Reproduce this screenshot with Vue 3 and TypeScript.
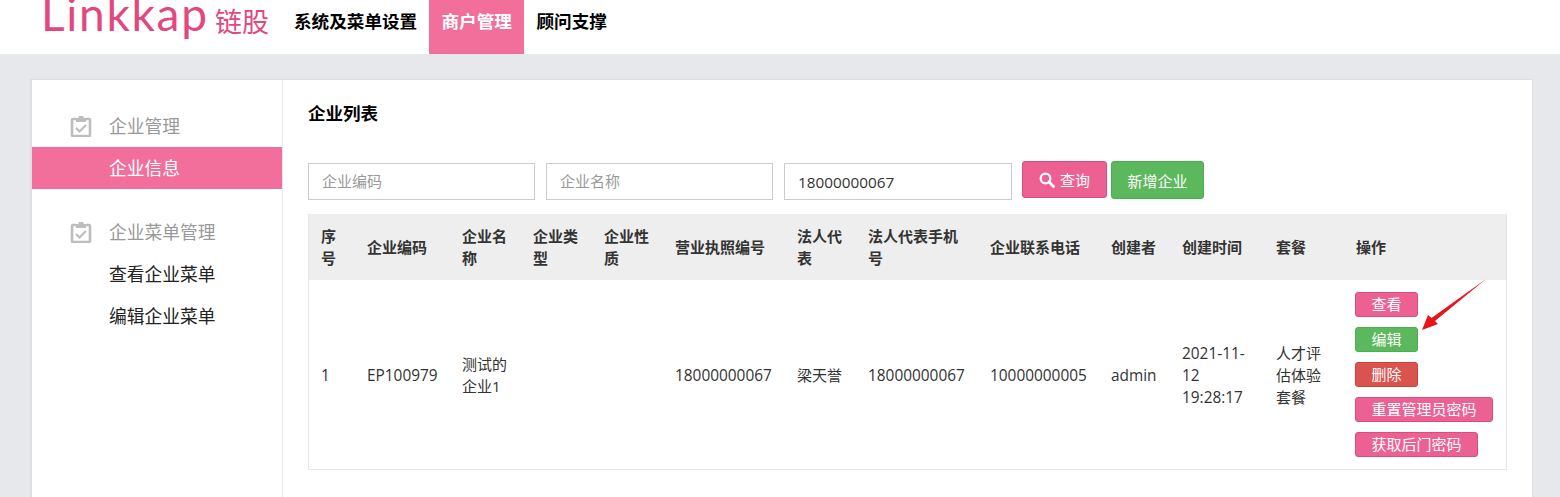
<script setup lang="ts">
interface SideGroup { title: string; items: { label: string; active?: boolean }[] }
const nav: { label: string; active?: boolean }[] = [
  { label: '系统及菜单设置' },
  { label: '商户管理', active: true },
  { label: '顾问支撑' },
]
const groups: SideGroup[] = [
  { title: '企业管理', items: [{ label: '企业信息', active: true }] },
  { title: '企业菜单管理', items: [{ label: '查看企业菜单' }, { label: '编辑企业菜单' }] },
]
const heads = ['序号', '企业编码', '企业名称', '企业类型', '企业性质', '营业执照编号', '法人代表', '法人代表手机号', '企业联系电话', '创建者', '创建时间', '套餐', '操作']
const cells = ['1', 'EP100979', '测试的企业1', '', '', '18000000067', '梁天誉', '18000000067', '10000000005', 'admin', '2021-11-12 19:28:17', '人才评估体验套餐']
const widths = [45, 95, 71, 71, 71, 122, 71, 122, 121, 71, 94, 80, 163]
const actions = [
  { label: '查看', kind: 'pink' },
  { label: '编辑', kind: 'green' },
  { label: '删除', kind: 'red' },
  { label: '重置管理员密码', kind: 'pink' },
  { label: '获取后门密码', kind: 'pink' },
]
const isLatin = (s: string): boolean => !/[\u4e00-\u9fff]/.test(s)
</script>

<template>
  <div class="page">
    <header class="top">
      <div class="logo"><span class="logo-en">Linkkap</span><span class="logo-cn">链股</span></div>
      <nav class="nav">
        <a v-for="n in nav" :key="n.label" class="nav-item" :class="{ on: n.active }">{{ n.label }}</a>
      </nav>
    </header>
    <main class="shell">
      <div class="card">
        <aside class="side">
          <section v-for="g in groups" :key="g.title" class="group">
            <div class="group-title">
              <svg class="clip" width="22" height="22" viewBox="0 0 22 22" fill="none">
                <path d="M6 4H3a1 1 0 0 0-1 1v15a1 1 0 0 0 1 1h16a1 1 0 0 0 1-1V5a1 1 0 0 0-1-1H16" stroke="#bdbdbd" stroke-width="2.6"/>
                <path d="M8.500 1h5v2H16v4H6V3h2.500z" fill="#bdbdbd"/>
                <path d="M6 13l3.500 3.500L16 10" stroke="#bdbdbd" stroke-width="2.200"/>
              </svg>
              <span class="group-label">{{ g.title }}</span>
            </div>
            <a v-for="i in g.items" :key="i.label" class="side-item" :class="{ on: i.active }">{{ i.label }}</a>
          </section>
        </aside>
        <section class="content">
          <h2 class="title">企业列表</h2>
          <div class="filters">
            <input class="field" placeholder="企业编码" />
            <input class="field" placeholder="企业名称" />
            <input class="field wide" value="18000000067" />
            <button class="btn query">
              <svg width="16" height="16" viewBox="0 0 16 16" fill="none"><circle cx="6.500" cy="6.500" r="4.800" stroke="#fff" stroke-width="2.300"/><path d="M10 10l4.500 4.500" stroke="#fff" stroke-width="2.800" stroke-linecap="round"/></svg>
              查询
            </button>
            <button class="btn add">新增企业</button>
          </div>
          <div class="table-wrap">
            <table class="table">
              <colgroup><col v-for="(w, i) in widths" :key="i" :style="{ width: w + 'px' }" /></colgroup>
              <thead><tr><th v-for="h in heads" :key="h">{{ h }}</th></tr></thead>
              <tbody>
                <tr>
                  <td v-for="(c, i) in cells" :key="i" :class="{ num: isLatin(c) }">{{ c }}</td>
                  <td class="ops">
                    <div class="ops-list">
                      <button v-for="a in actions" :key="a.label" class="mini" :class="a.kind">{{ a.label }}</button>
                    </div>
                    <svg class="arrow" width="70" height="56" viewBox="0 0 70 56"><path d="M68 2L17 44l3 3L4 53l6-15 3.500 3z" fill="#e8141c"/></svg>
                  </td>
                </tr>
              </tbody>
            </table>
          </div>
        </section>
      </div>
    </main>
  </div>
</template>

<style>
html, body { margin: 0; background: #e7e8ec; overflow: hidden; }
</style>

<style scoped>
.page { width: 1560px; height: 497px; overflow: hidden; font-family: "Open Sans", "Noto Sans CJK SC", sans-serif; color: #333; font-size: 15px; }
.top { height: 54px; background: #fff; display: flex; }
.logo { width: 294px; height: 54px; box-sizing: border-box; padding-left: 41px; color: #e2487f; display: flex; align-items: flex-start; overflow: hidden; flex: none; }
.logo-en { font-family: "Lato", sans-serif; font-size: 46px; font-weight: 400; letter-spacing: 1.700px; line-height: 44px; height: 54px; margin-top: -8px; width: 174px; flex: none; }
.logo-cn { font-family: "Noto Sans CJK SC", sans-serif; font-size: 27px; line-height: 42px; }
.nav { display: flex; }
.nav-item { height: 54px; line-height: 42px; font-size: 17.600px; font-weight: 700; color: #000; padding: 0 12.300px; }
.nav-item:first-child { padding: 0 12px 0 0; }
.nav-item.on { background: #f26f9b; color: #fff; }
.shell { padding: 25px 27px 0 30px; }
.card { background: #fff; border: 1px solid #dddee2; border-left-width: 2px; height: 430px; display: flex; }
.side { width: 250px; border-right: 1px solid #e7e8ec; padding-top: 25px; flex: none; }
.group { margin-bottom: 22px; }
.group-title { height: 42px; display: flex; align-items: center; color: #999; font-size: 17.750px; padding-left: 38px; gap: 17px; }
.group-label { margin-top: -2px; }
.clip { flex: none; }
.side-item { display: block; height: 42px; line-height: 42px; padding-left: 77px; font-size: 17.750px; color: #222; }
.side-item.on { background: #f26f9b; color: #fff; }
.content { flex: 1; padding: 0 25px; min-width: 0; }
.title { margin: 22px 0 0; font-size: 17.500px; line-height: 22px; font-weight: 700; color: #000; }
.filters { display: flex; align-items: flex-start; margin-top: 37px; height: 40px; }
.field { width: 227px; height: 37px; margin-top: 2px; box-sizing: border-box; border: 1px solid #ccc; padding: 0 13px 2px; font: 15px "Open Sans", "Noto Sans CJK SC", sans-serif; color: #333; margin-right: 11px; outline: none; background: #fff; }
.field.wide { width: 228px; margin-right: 10px; font-size: 15.300px; padding-bottom: 0; }
.field::placeholder { color: #999; opacity: 1; }
.btn { height: 38px; border-radius: 3px; border: 1px solid; color: #fff; font: 15px "Open Sans", "Noto Sans CJK SC", sans-serif; display: inline-flex; align-items: center; justify-content: center; gap: 5px; padding: 0; margin-right: 4px; }
.query { width: 85px; height: 37px; background: #ec6192; border-color: #d84d80; }
.add { width: 93px; background: #5cb85c; border-color: #4cae4c; }
.table-wrap { margin-top: 13px; width: 1199px; box-sizing: border-box; border: 1px solid #e6e6e6; border-top: 0; }
.table { border-collapse: collapse; table-layout: fixed; width: 1197px; }
th { background: #eee; font-weight: 700; font-size: 15px; text-align: left; line-height: 22px; padding: 11px 13px; color: #333; }
th:first-child, td:first-child { padding-left: 12px; }
td { box-sizing: border-box; padding: 0 13px; line-height: 22px; vertical-align: middle; font-size: 15px; color: #333; height: 189px; }
td.num { font-size: 15.400px; padding-top: 2px; }
.ops { position: relative; }
.ops-list { display: flex; flex-direction: column; align-items: flex-start; gap: 10px; margin-left: -1px; }
.mini { height: 25px; padding: 0 15.500px; border-radius: 3px; border: 1px solid; color: #fff; font: 15px/23px "Open Sans", "Noto Sans CJK SC", sans-serif; white-space: nowrap; }
.mini.pink { background: #ec6192; border-color: #d84d80; }
.mini.green { background: #5cb85c; border-color: #4cae4c; }
.mini.red { background: #d9534f; border-color: #d43f3a; }
.arrow { position: absolute; left: 75px; top: -3px; }
</style>
